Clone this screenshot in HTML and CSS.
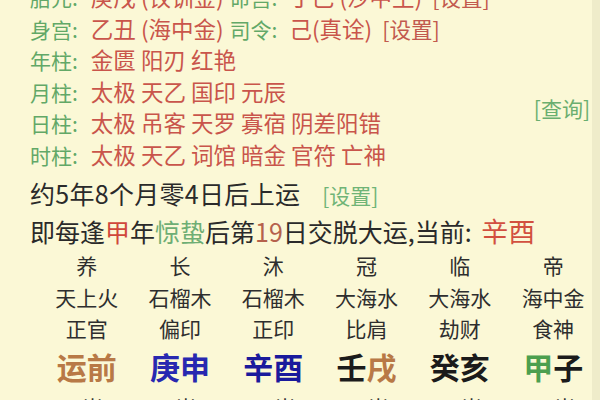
FILE: index.html
```html
<!DOCTYPE html>
<html lang="zh-CN">
<head>
<meta charset="utf-8">
<link rel="stylesheet" href="styles.css">
</head>
<body>
<div class="screen">
  <main class="page">
    <section class="info">
      <div class="lines">
        <div class="row"><span class="lbl">胎元:</span><span class="val">庚戌 (钗钏金)</span><span class="lbl lbl2">命宫:</span><span class="val">丁巳 (沙中土)</span><span class="set">[设置]</span></div>
        <div class="row"><span class="lbl">身宫:</span><span class="val">乙丑 (海中金)</span><span class="lbl lbl2">司令:</span><span class="val">己(真诠)</span><span class="set">[设置]</span></div>
        <div class="row"><span class="lbl">年柱:</span><span class="val">金匮 阳刃 红艳</span></div>
        <div class="row"><span class="lbl">月柱:</span><span class="val">太极 天乙 国印 元辰</span></div>
        <div class="row"><span class="lbl">日柱:</span><span class="val">太极 吊客 天罗 寡宿 阴差阳错</span></div>
        <div class="row"><span class="lbl">时柱:</span><span class="val">太极 天乙 词馆 暗金 官符 亡神</span></div>
      </div>
      <div class="side"><span class="query">[查询]</span></div>
    </section>
    <section class="yun">
      <div class="yline yline1">约5年8个月零4日后上运 <span class="set-g">[设置]</span></div>
      <div class="yline">即每逢<span class="red">甲</span>年<span class="green">惊蛰</span>后第<span class="num">19</span>日交脱大运,当前: <span class="cur">辛酉</span></div>
    </section>
    <section class="grid">
      <div class="c r1">养</div><div class="c r1">长</div><div class="c r1">沐</div><div class="c r1">冠</div><div class="c r1">临</div><div class="c r1">帝</div>
      <div class="c r2">天上火</div><div class="c r2">石榴木</div><div class="c r2">石榴木</div><div class="c r2">大海水</div><div class="c r2">大海水</div><div class="c r2">海中金</div>
      <div class="c r3">正官</div><div class="c r3">偏印</div><div class="c r3">正印</div><div class="c r3">比肩</div><div class="c r3">劫财</div><div class="c r3">食神</div>
      <div class="c r4 brown">运前</div><div class="c r4 blue">庚申</div><div class="c r4 navy">辛酉</div><div class="c r4">壬<span class="brown">戌</span></div><div class="c r4">癸亥</div><div class="c r4"><span class="gz-green">甲</span>子</div>
      <div class="c r5">1岁</div><div class="c r5">6岁</div><div class="c r5">16岁</div><div class="c r5">26岁</div><div class="c r5">36岁</div><div class="c r5">46岁</div>
    </section>
  </main>
  <div class="strip"></div>
</div>
</body>
</html>
```
FILE: styles.css
```css
html, body {
  margin: 0;
  padding: 0;
}
body {
  width: 600px;
  height: 400px;
  overflow: hidden;
  background: #fbf8d6;
  font-family: "Noto Sans CJK SC", "Noto Sans", sans-serif;
  color: #2b2b2b;
}
.screen {
  display: flex;
  width: 600px;
  height: 400px;
  overflow: hidden;
}
.page {
  flex: 1;
  min-width: 0;
}
.strip {
  width: 8px;
  background: #efecca;
}
.info {
  display: flex;
  margin-top: -19px;
  padding-left: 30px;
}
.lines {
  flex: 1;
}
.row {
  height: 31.6px;
  line-height: 31.6px;
  font-size: 21px;
  white-space: nowrap;
}
.lbl {
  color: #62a867;
  margin-right: 13px;
}
.lbl2 {
  margin-left: 6px;
  margin-right: 12px;
}
.val {
  color: #c9554b;
  font-size: 22.5px;
}
.set {
  color: #c25a4e;
  margin-left: 10px;
  font-size: 21.5px;
}
.side {
  padding-top: 113px;
  padding-right: 2px;
}
.query {
  color: #6aae6f;
  font-size: 21px;
  line-height: 28px;
}
.yun {
  padding-left: 30px;
  margin-top: 3px;
}
.yline {
  height: 38px;
  line-height: 38px;
  font-size: 25px;
  white-space: nowrap;
  color: #2a2a2a;
}
.yline1 {
  letter-spacing: 0.3px;
}
.set-g {
  color: #70b476;
  font-size: 21px;
  margin-left: 16px;
  letter-spacing: 0;
}
.red { color: #d0473b; }
.green { color: #6eae74; }
.num { color: #b5614c; }
.cur {
  color: #d2503f;
  font-size: 27px;
  margin-left: 4px;
}
.grid {
  margin-left: 40px;
  margin-top: 0;
  display: grid;
  grid-template-columns: repeat(6, 93.3px);
  grid-template-rows: 32px 31px 32px 42px 40px;
}
.c {
  text-align: center;
  white-space: nowrap;
  color: #2e2e2e;
}
.r1, .r2, .r3 {
  font-size: 21px;
  line-height: 30px;
}
.r4 {
  font-size: 30px;
  font-weight: bold;
  line-height: 42px;
  color: #1b1b1b;
}
.r5 {
  font-size: 21px;
  line-height: 40px;
}
.brown { color: #b87946; }
.blue { color: #2828b0; }
.navy { color: #1a1a9c; }
.gz-green { color: #4c9f4f; }
```
